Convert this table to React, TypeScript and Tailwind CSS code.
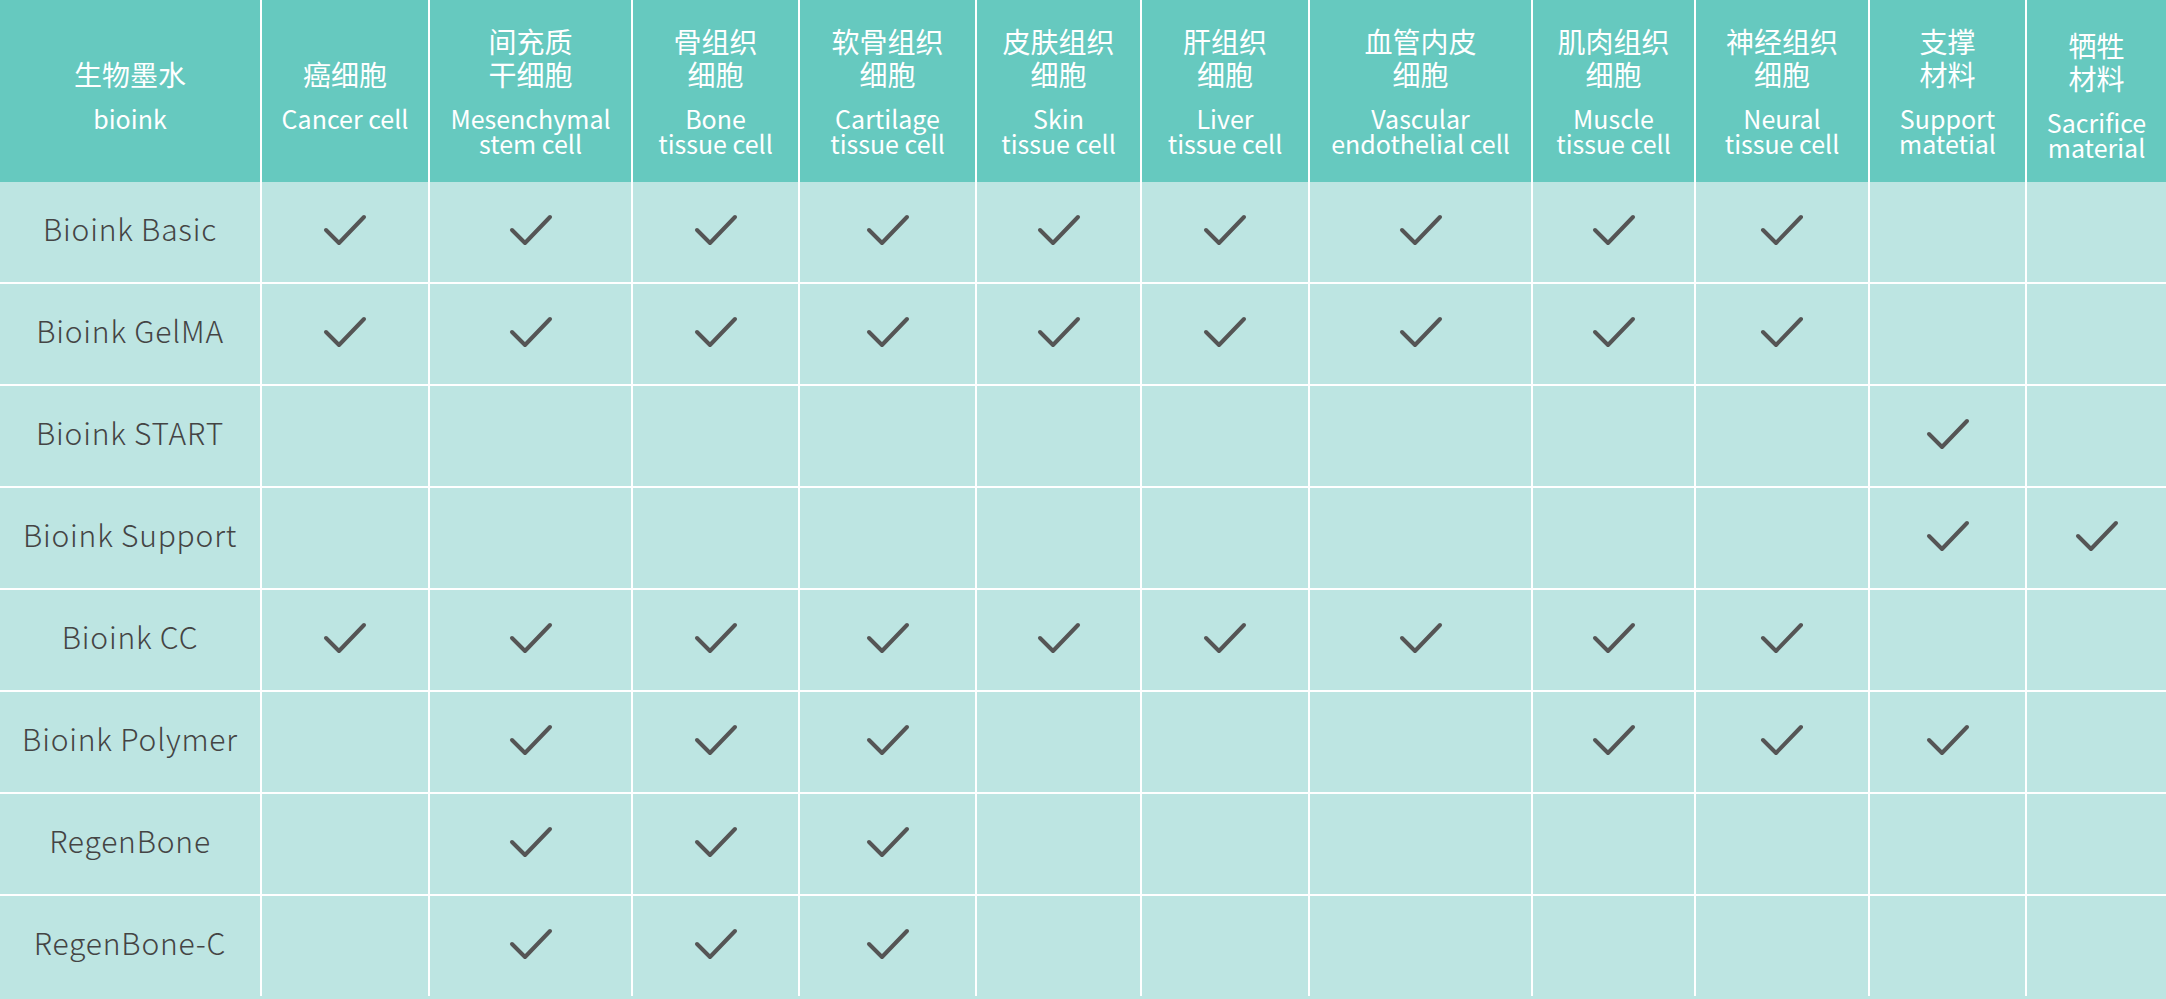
const cols = [
  { cn: ["癌细胞"], en: ["Cancer cell"] },
  { cn: ["间充质", "干细胞"], en: ["Mesenchymal", "stem cell"] },
  { cn: ["骨组织", "细胞"], en: ["Bone", "tissue cell"] },
  { cn: ["软骨组织", "细胞"], en: ["Cartilage", "tissue cell"] },
  { cn: ["皮肤组织", "细胞"], en: ["Skin", "tissue cell"] },
  { cn: ["肝组织", "细胞"], en: ["Liver", "tissue cell"] },
  { cn: ["血管内皮", "细胞"], en: ["Vascular", "endothelial cell"] },
  { cn: ["肌肉组织", "细胞"], en: ["Muscle", "tissue cell"] },
  { cn: ["神经组织", "细胞"], en: ["Neural", "tissue cell"] },
  { cn: ["支撑", "材料"], en: ["Support", "matetial"] },
  { cn: ["牺牲", "材料"], en: ["Sacrifice", "material"] },
];

const rows: { name: string; checks: number[] }[] = [
  { name: "Bioink Basic", checks: [1, 2, 3, 4, 5, 6, 7, 8, 9] },
  { name: "Bioink GelMA", checks: [1, 2, 3, 4, 5, 6, 7, 8, 9] },
  { name: "Bioink START", checks: [10] },
  { name: "Bioink Support", checks: [10, 11] },
  { name: "Bioink CC", checks: [1, 2, 3, 4, 5, 6, 7, 8, 9] },
  { name: "Bioink Polymer", checks: [2, 3, 4, 8, 9, 10] },
  { name: "RegenBone", checks: [2, 3, 4] },
  { name: "RegenBone-C", checks: [2, 3, 4] },
];

const font = {
  fontFamily: '"Noto Sans CJK SC", "Noto Sans", sans-serif',
};

function Check() {
  return (
    <svg width="44" height="32" viewBox="0 0 44 32" fill="none" className="-mt-[4px]">
      <path
        d="M3 16 L16 29 L41 3"
        stroke="#555555"
        strokeWidth={4}
        strokeLinecap="round"
        strokeLinejoin="round"
      />
    </svg>
  );
}

export default function App() {
  return (
    <div
      className="w-[2166px] h-[999px] overflow-hidden bg-[#bde5e2]"
      style={font}
    >
      <div className="grid grid-cols-[260px_168px_203px_167px_177px_165px_168px_223px_163px_174px_157px_141px]">
        {/* header */}
        <div className="h-[182px] bg-[#66c9bf] text-white flex flex-col items-center pt-[25px]">
          <div className="h-[66px] flex flex-col justify-end text-[28px] leading-[33px]">
            生物墨水
          </div>
          <div className="mt-[15px] text-[25px] leading-[25px]">bioink</div>
        </div>
        {cols.map((c, i) => (
          <div
            key={i}
            className={
              "h-[182px] bg-[#66c9bf] text-white border-l-2 border-white flex flex-col items-center text-center " +
              (i === 10 ? "pt-[29px]" : "pt-[25px]")
            }
          >
            <div className="h-[66px] flex flex-col justify-end text-[28px] leading-[33px]">
              {c.cn.map((t) => (
                <div key={t}>{t}</div>
              ))}
            </div>
            <div className="mt-[15px] text-[25px] leading-[25px] whitespace-nowrap">
              {c.en.map((t) => (
                <div key={t}>{t}</div>
              ))}
            </div>
          </div>
        ))}

        {/* body */}
        {rows.map((r, ri) => (
          <Row key={r.name} name={r.name} checks={r.checks} first={ri === 0} />
        ))}
      </div>
    </div>
  );
}

function Row({ name, checks, first }: { name: string; checks: number[]; first: boolean }) {
  const h = first ? "h-[100px]" : "h-[102px] border-t-2 border-white";
  return (
    <>
      <div className={h + " flex items-center justify-center text-[30px] font-light text-[#444444] tracking-[0.8px] pb-[7px]"}>
        {name}
      </div>
      {cols.map((_, ci) => (
        <div key={ci} className={h + " border-l-2 border-white flex items-center justify-center"}>
          {checks.includes(ci + 1) && <Check />}
        </div>
      ))}
    </>
  );
}
